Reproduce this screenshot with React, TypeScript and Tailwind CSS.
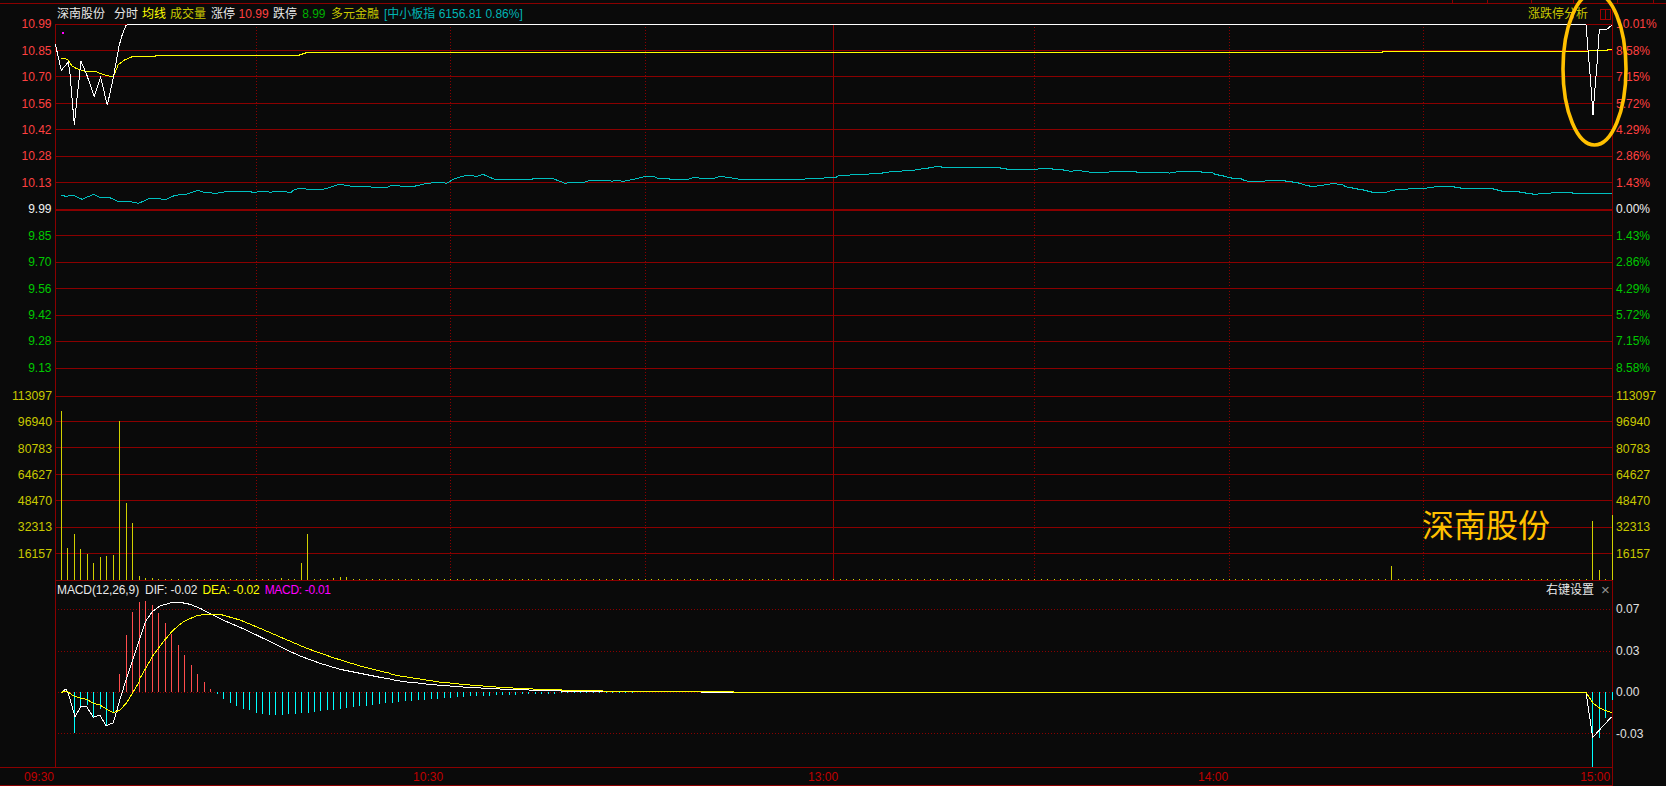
import React from "react";

type P = [number, number];
const conv = (list: P[], ox: number, oy: number, sx = 3, sy = 3) =>
  list.map(([x, y]) => `${(ox + x / sx).toFixed(1)},${(oy + y / sy).toFixed(1)}`).join(" ");

const GRID = "#8a0000";

const priceWhite =
  "55.3,44 61.3,70.3 68.3,62 70,74 74.3,124.7 76,108 81,61.3 86.7,74.7 94.3,96.3 100.7,77.3 107.3,105.3 113.3,78 119,46.3 121.7,36.3 126,25.3 128.3,24.5 1586,24.5 1588,50 1590.5,80 1593,115 1595,88 1597.3,60 1599.3,29.5 1606.7,29.5 1612,25";
const priceYellow =
  "61.3,58.3 67.7,59.3 71.7,65.7 76,68.3 85,71.3 95,71.3 100,73.3 106.7,75.7 113.3,76.7 118.3,64.7 125,59.7 132.7,56.5 155.7,56.5 156,55.5 298,55.5 307,52.5 1382,52.5 1382,51.5 1588,51.5 1588,50.5 1607,50.5 1608,49.5 1612,49";

const cyan1: P[] = [[170,586],[185,589],[205,586],[230,598],[262,583],[280,592],[305,592],[330,604],[360,604],[388,610],[420,595],[465,598],[490,586],[520,583],[555,571],[570,577],[605,580],[640,574],[690,574],[710,577],[745,574],[755,577],[780,574],[815,577],[825,568],[845,565],[875,570],[905,568],[925,562],[950,553],[985,559],[1035,559],[1040,562],[1085,562],[1095,556],[1130,559],[1160,559],[1195,550],[1235,547],[1250,550],[1270,538],[1290,530],[1310,526],[1335,529],[1352,523],[1385,538],[1400,538],[1490,538],[1495,535],[1545,535],[1566,543]];
const cyan2: P[] = [[0,184],[15,190],[33,187],[72,187],[90,181],[150,181],[155,184],[168,181],[190,184],[207,181],[222,178],[235,175],[252,170],[282,170],[292,175],[327,175],[330,178],[385,178],[402,172],[423,175],[462,175],[480,169],[500,172],[522,175],[540,178],[735,178],[738,175],[792,175],[795,172],[828,172],[838,166],[870,166],[872,163],[927,163],[930,160],[966,160],[970,157],[987,157],[990,154],[1026,154],[1028,151],[1065,151],[1068,148],[1083,148],[1085,145],[1105,145],[1107,142],[1122,142],[1124,139],[1143,139],[1145,142],[1320,142],[1322,145],[1338,145],[1340,148],[1433,148],[1435,145],[1476,145],[1478,148],[1500,148]];
const cyan3: P[] = [[15,151],[33,154],[51,151],[72,154],[93,157],[147,157],[150,154],[228,154],[230,157],[324,157],[327,160],[342,157],[363,154],[423,154],[425,157],[456,157],[465,163],[480,166],[495,169],[504,172],[519,175],[540,175],[552,181],[564,184],[615,184],[618,181],[675,181],[678,184],[696,184],[699,187],[714,187],[716,190],[730,193],[738,196],[753,199],[771,199],[773,196],[792,196],[795,193],[810,193],[812,190],[830,190],[832,193],[846,193],[855,199],[865,202],[876,202],[878,205],[891,205],[893,208],[909,208],[911,211],[921,211],[923,214],[933,214],[935,217],[981,217],[983,214],[990,214],[992,211],[1005,211],[1007,208],[1044,208],[1046,205],[1101,205],[1103,202],[1122,202],[1124,199],[1182,199],[1185,202],[1200,202],[1202,205],[1299,205],[1301,208],[1311,208],[1313,211],[1323,211],[1325,214],[1377,214],[1380,217],[1395,217],[1398,220],[1416,220],[1418,223],[1433,223],[1435,220],[1473,220],[1475,217],[1500,217]];
const cyanLine =
  conv(cyan1, 0, 0, 2.8, 3) + " " + conv(cyan2, 560, 120) + " " + conv(cyan3, 1060, 120) + " 1572,192.5 1573,193.5 1612,193.5";

const volTops: Record<number, number> = {
  1: 411, 2: 548, 3: 534, 4: 549, 5: 554, 6: 563, 7: 557, 8: 556, 9: 555, 10: 421, 11: 503, 12: 523, 13: 576,
  14: 578, 15: 578, 43: 578, 44: 577, 45: 577, 35: 578, 38: 563, 39: 534, 206: 566, 237: 521, 238: 570, 240: 515,
};
const barX = (i: number) => Math.floor(61.3 + (i - 1) * 6.49) + 0.5;

const dif1: P[] = [[34,97],[47,87],[55,100],[75,170],[92,140],[110,140],[130,172],[150,165],[168,198],[190,188],[208,125],[228,60],[245,10]];
const dea1: P[] = [[34,97],[50,93],[70,107],[92,115],[110,118],[130,130],[150,135],[170,148],[190,158],[210,150],[230,128],[250,95],[268,65]];
const dif2: P[] = [[436,155],[457,125],[480,108],[510,99],[540,97],[570,103],[600,115],[640,135],[680,155],[720,172],[780,200],[850,235],[900,258],[960,280],[1020,298],[1080,310],[1140,322],[1170,327]];
const dea2: P[] = [[420,325],[440,290],[460,255],[490,215],[520,180],[550,155],[590,137],[620,132],[660,133],[720,150],[780,175],[850,205],[920,235],[1000,263],[1080,288],[1140,303],[1170,310]];
const dif3: P[] = [[0,238],[18,241],[36,244],[57,247],[96,250],[114,253],[153,256],[192,259],[231,262],[291,265],[348,268],[447,271],[543,274],[933,274],[933,277]];
const dea3: P[] = [[0,220],[3,223],[18,226],[36,229],[57,232],[75,235],[96,238],[114,241],[135,244],[153,247],[192,250],[213,253],[252,256],[291,259],[330,262],[387,265],[447,268],[543,271],[678,274],[960,274]];
const difLine = conv(dif1, 50, 660) + " " + conv(dif2, 0, 570) + " " + conv(dif3, 390, 600) + " 1586,692.5 1592.7,737.3 1611.7,716.7";
const deaLine = conv(dea1, 50, 660) + " " + conv(dea2, 0, 570) + " " + conv(dea3, 390, 600) + " 733,691.5 733,692.5 1586,692.5 1593.3,703.3 1600,708.3 1606.7,711 1611.7,712.7";

const redBars: P[] = [[52,687],[358,674],[380,635],[397,612],[418,602],[436,601],[457,605],[475,613],[496,623],[514,634],[535,645],[553,655],[574,665],[592,674],[613,682],[631,689]];
const cyanBars: P[] = [[223,732.7],[241,706.7],[262,705],[280,717],[301,709],[319,725],[340,712],[652,694],[670,699],[691,703],[709,706],[730,709],[748,710],[769,713],[787,714],[808,715],[826,715],[847,715],[865,714],[886,714],[904,713],[925,713],[943,712],[961,711],[982,710],[1000,710],[1021,709],[1039,708],[1060,707],[1078,706],[1099,706],[1117,705],[1138,704],[1156,703]];
const cyanBars2: P[] = [[7,703],[25,702],[46,701],[64,701],[85,700],[103,700],[124,699],[142,699],[163,698],[181,698],[202,697],[220,697],[241,696],[259,696],[280,696],[298,696],[319,695],[337,695],[358,695],[376,695],[397,694],[415,694],[436,694],[454,694],[475,694],[493,694],[514,693],[532,693],[553,693],[571,693],[589,693],[610,693],[628,693],[649,693],[667,693],[688,693],[706,693],[727,693]];

const priceRows = [24, 50, 76, 103, 129, 156, 182, 235, 262, 288, 315, 341, 368];
const volRows = [421, 447, 474, 500, 527, 553];
const dotted = [256, 450, 645, 1034, 1229, 1423];

const RED = "text-[#ff4040]";
const GREEN = "text-[#00c800]";
const WHITE = "text-[#f0f0f0]";

const leftPrices: [string, string][] = [
  ["10.99", RED], ["10.85", RED], ["10.70", RED], ["10.56", RED], ["10.42", RED], ["10.28", RED], ["10.13", RED],
  ["9.99", WHITE], ["9.85", GREEN], ["9.70", GREEN], ["9.56", GREEN], ["9.42", GREEN], ["9.28", GREEN], ["9.13", GREEN],
];
const rightPrices: [string, string][] = [
  ["10.01%", RED], ["8.58%", RED], ["7.15%", RED], ["5.72%", RED], ["4.29%", RED], ["2.86%", RED], ["1.43%", RED],
  ["0.00%", WHITE], ["1.43%", GREEN], ["2.86%", GREEN], ["4.29%", GREEN], ["5.72%", GREEN], ["7.15%", GREEN], ["8.58%", GREEN],
];
const vols = ["113097", "96940", "80783", "64627", "48470", "32313", "16157"];

function PriceAxis({ items, right }: { items: [string, string][]; right?: boolean }) {
  return (
    <div className="flex flex-col -mt-[13px]">
      {items.map(([t, c], i) => (
        <div key={i} className={`h-[26.45px] flex items-center ${right ? "pl-[3px]" : "justify-end pr-[3.5px]"} ${c}`}>
          {t}
        </div>
      ))}
    </div>
  );
}

function VolAxis({ right }: { right?: boolean }) {
  return (
    <div className="flex flex-col -mt-[13px] text-[12.3px] text-[#c8c800]">
      {vols.map((t) => (
        <div key={t} className={`h-[26.3px] flex items-center ${right ? "pl-[3px]" : "justify-end pr-[3px]"}`}>
          {t}
        </div>
      ))}
    </div>
  );
}

export default function App() {
  return (
    <div
      className="relative w-[1666px] h-[786px] overflow-hidden bg-[#0a0a0a] text-[12px] leading-none flex flex-col"
      style={{ fontFamily: '"Liberation Sans","Noto Sans CJK SC",sans-serif' }}
    >
      {/* top tab strip */}
      <div className="flex h-[4px] shrink-0 border-b border-[#8a0000]">
        <div className="w-[1453px] border-r border-[#8a0000]" />
        <div className="w-[35px] border-r border-[#8a0000]" />
        <div className="w-[44px] border-r border-[#8a0000]" />
        <div className="w-[42px] border-r border-[#8a0000]" />
        <div className="w-[44px] border-r border-[#8a0000]" />
        <div className="w-[36px] border-r border-[#8a0000]" />
      </div>

      {/* header */}
      <div className="flex h-[20px] w-[1613px] shrink-0 items-center border-r border-[#8a0000]">
        <span className="ml-[57px] text-[#e8e8e8]">深南股份</span>
        <span className="ml-[9px] text-[#e8e8e8]">分时</span>
        <span className="ml-[4px] text-[#ffff00]">均线</span>
        <span className="ml-[4px] text-[#c8c800]">成交量</span>
        <span className="ml-[5px] text-[#e8e8e8]">涨停</span>
        <span className="ml-[3.5px] text-[#ff4040]">10.99</span>
        <span className="ml-[4.5px] text-[#e8e8e8]">跌停</span>
        <span className="ml-[5px] text-[#00b000]">8.99</span>
        <span className="ml-[5.5px] text-[#c8c800]">多元金融</span>
        <span className="ml-[5px] text-[#00b4b4]">[中小板指 6156.81 0.86%]</span>
        <span className="ml-auto text-[#c8c800]">涨跌停分析</span>
        <div className="ml-[12px] mr-[1px] flex h-[11px] w-[11px] border border-[#a00000]">
          <div className="w-[5px] border-r border-[#a00000]" />
        </div>
      </div>

      {/* price */}
      <div className="flex h-[372px] shrink-0">
        <div className="w-[55px] shrink-0">
          <PriceAxis items={leftPrices} />
        </div>
        <svg className="block shrink-0" width={1558} height={372} viewBox="55 24 1558 372" shapeRendering="crispEdges">
          {priceRows.map((y) => (
            <line key={y} x1={55} x2={1613} y1={y + 0.5} y2={y + 0.5} stroke={GRID} />
          ))}
          <line x1={55} x2={1613} y1={210} y2={210} stroke={GRID} strokeWidth={2} />
          <line x1={55.5} x2={55.5} y1={24} y2={396} stroke={GRID} />
          <line x1={1612.5} x2={1612.5} y1={24} y2={396} stroke={GRID} />
          <line x1={833.5} x2={833.5} y1={24} y2={396} stroke={GRID} />
          {dotted.map((x) => (
            <line key={x} x1={x + 0.5} x2={x + 0.5} y1={24} y2={396} stroke={GRID} strokeDasharray="1 2" />
          ))}
          <polyline points={cyanLine} fill="none" stroke="#00c0c0" />
          <polyline points={priceYellow} fill="none" stroke="#ffff00" />
          <polyline points={priceWhite} fill="none" stroke="#ffffff" />
          <rect x={62} y={32} width={2} height={2} fill="#ff00ff" />
        </svg>
        <div className="flex-1">
          <PriceAxis items={rightPrices} right />
        </div>
      </div>

      {/* volume */}
      <div className="flex h-[184px] shrink-0">
        <div className="w-[55px] shrink-0">
          <VolAxis />
        </div>
        <svg className="block shrink-0" width={1558} height={184} viewBox="55 396 1558 184" shapeRendering="crispEdges">
          <line x1={55} x2={1613} y1={396} y2={396} stroke={GRID} strokeWidth={2} />
          {volRows.map((y) => (
            <line key={y} x1={55} x2={1613} y1={y + 0.5} y2={y + 0.5} stroke={GRID} />
          ))}
          <line x1={55.5} x2={55.5} y1={396} y2={580} stroke={GRID} />
          <line x1={1612.5} x2={1612.5} y1={396} y2={580} stroke={GRID} />
          <line x1={833.5} x2={833.5} y1={396} y2={580} stroke={GRID} />
          {dotted.map((x) => (
            <line key={x} x1={x + 0.5} x2={x + 0.5} y1={396} y2={580} stroke={GRID} strokeDasharray="1 2" />
          ))}
          {Array.from({ length: 240 }, (_, k) => k + 1).map((i) => (
            <line key={i} x1={barX(i)} x2={barX(i)} y1={volTops[i] ?? 578.5} y2={580} stroke="#d0d000" />
          ))}
        </svg>
        <div className="flex-1">
          <VolAxis right />
        </div>
      </div>

      {/* macd */}
      <div className="relative flex h-[187px] shrink-0">
        <div className="w-[55px] shrink-0" />
        <svg className="block shrink-0" width={1558} height={187} viewBox="55 580 1558 187" shapeRendering="crispEdges">
          <line x1={55} x2={1613} y1={580.5} y2={580.5} stroke={GRID} />
          {[609.5, 651.5, 692.5, 733.5].map((y) => (
            <line key={y} x1={55} x2={1612} y1={y} y2={y} stroke={GRID} strokeDasharray="1 2" />
          ))}
          <line x1={55.5} x2={55.5} y1={580} y2={767} stroke={GRID} />
          <line x1={1612.5} x2={1612.5} y1={580} y2={767} stroke={GRID} />
          {redBars.map(([x, y]) => (
            <line key={x} x1={Math.floor(x / 3) + 0.5} x2={Math.floor(x / 3) + 0.5} y1={y} y2={692} stroke="#ff4d4d" />
          ))}
          {cyanBars.map(([x, y]) => (
            <line key={x} x1={Math.floor(x / 3) + 0.5} x2={Math.floor(x / 3) + 0.5} y1={692} y2={y} stroke="#00ffff" />
          ))}
          {cyanBars2.map(([x, y]) => (
            <line key={x} x1={Math.floor(390 + x / 3) + 0.5} x2={Math.floor(390 + x / 3) + 0.5} y1={692} y2={y} stroke="#00ffff" />
          ))}
          <line x1={1592.5} x2={1592.5} y1={692} y2={767} stroke="#00ffff" />
          <line x1={1599.5} x2={1599.5} y1={692} y2={738} stroke="#00ffff" />
          <line x1={1605.5} x2={1605.5} y1={692} y2={718} stroke="#00ffff" />
          <line x1={1612.5} x2={1612.5} y1={692} y2={700} stroke="#00ffff" />
          <polyline points={difLine} fill="none" stroke="#ffffff" />
          <polyline points={deaLine} fill="none" stroke="#ffff00" />
        </svg>
        <div className="flex-1 pt-[8.5px] pl-[3px] text-[#e0e0e0]">
          {["0.07", "0.03", "0.00", "-0.03"].map((t) => (
            <div key={t} className="h-[41.5px] flex items-center">
              {t}
            </div>
          ))}
        </div>
        {/* legend over the panel */}
        <div className="absolute left-[57px] top-[3px] flex h-[13px] items-center">
          <span className="text-[#e8e8e8] tracking-[-0.1px]">MACD(12,26,9)</span>
          <span className="ml-[6px] text-[#e8e8e8] tracking-[-0.1px]">DIF: -0.02</span>
          <span className="ml-[5px] text-[#ffff00] tracking-[-0.15px]">DEA: -0.02</span>
          <span className="ml-[5px] text-[#ff00ff] tracking-[-0.3px]">MACD: -0.01</span>
        </div>
        <div className="absolute left-[1546px] top-[3px] flex h-[13px] items-center">
          <span className="text-[#e8e8e8]">右键设置</span>
          <span className="ml-[7px] text-[#909090] text-[15px]">×</span>
        </div>
      </div>

      {/* time axis */}
      <div className="flex h-[19px] w-[1613px] shrink-0 items-center border-t border-b border-r border-[#8a0000] text-[#c00000]">
        <span className="ml-[24px]">09:30</span>
        <span className="ml-[359px]">10:30</span>
        <span className="ml-[365px]">13:00</span>
        <span className="ml-[360px]">14:00</span>
        <span className="ml-[352px]">15:00</span>
      </div>

      {/* annotations drawn over the chart */}
      <div className="absolute left-[1422px] top-[507px] text-[32px] leading-[38px] text-[#ffc000] whitespace-nowrap">
        深南股份
      </div>
      <svg className="absolute left-0 top-0 pointer-events-none" width={1666} height={200} viewBox="0 0 1666 200">
        <ellipse cx={1594.5} cy={69} rx={31.5} ry={76} fill="none" stroke="#ffc000" strokeWidth={3.6} />
      </svg>
    </div>
  );
}
